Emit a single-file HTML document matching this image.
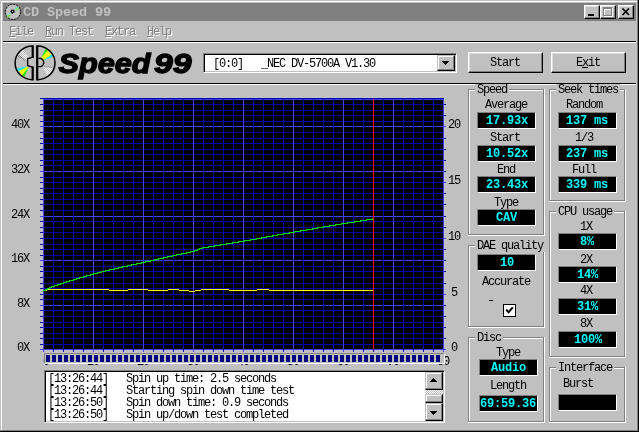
<!DOCTYPE html>
<html><head><meta charset="utf-8"><title>CD Speed 99</title>
<style>
html,body{margin:0;padding:0;background:#c0c0c0;overflow:hidden}
#w{will-change:transform;position:relative;width:639px;height:432px;background:#c0c0c0;overflow:hidden;font-family:"Liberation Mono",monospace;font-size:12px;line-height:12px;color:#000}
#w div,#w svg,#w span{position:absolute}
#w span{position:static}
.t{white-space:pre;letter-spacing:-1.2px;height:12px}
.b{white-space:pre;letter-spacing:-0.2px;height:12px;font-weight:bold;color:#00ffff}
.m{white-space:pre;letter-spacing:-1.2px;height:12px;color:#808080;text-shadow:1px 1px 0 #fff}
.vb{background:#000;border-top:1px solid #808080;border-left:1px solid #808080;border-bottom:1px solid #fff;border-right:1px solid #fff;width:57px;height:15px}
.gw{border:1px solid #fff;box-sizing:border-box}
.gd{border:1px solid #808080;box-sizing:border-box}
.gl{background:#c0c0c0;white-space:pre;letter-spacing:-1.2px;height:12px;padding:0 2px}
.btn{box-sizing:border-box;background:#c0c0c0;border-top:1px solid #fff;border-left:1px solid #fff;border-bottom:1px solid #000;border-right:1px solid #000;box-shadow:inset -1px -1px 0 #808080,inset 1px 1px 0 #dfdfdf}
.sbtn{box-sizing:border-box;background:#c0c0c0;border-top:1px solid #c0c0c0;border-left:1px solid #c0c0c0;border-bottom:1px solid #000;border-right:1px solid #000;box-shadow:inset -1px -1px 0 #808080,inset 1px 1px 0 #fff}
u{text-decoration:underline;text-decoration-thickness:1px;text-underline-offset:1px;text-decoration-skip-ink:none}
</style></head><body><div id="w">
<div style="left:1px;top:1px;width:636px;height:1px;background:#fff;"></div>
<div style="left:1px;top:1px;width:1px;height:429px;background:#fff;"></div>
<div style="left:637px;top:0px;width:1px;height:431px;background:#808080;"></div>
<div style="left:0px;top:430px;width:638px;height:1px;background:#808080;"></div>
<div style="left:638px;top:0px;width:1px;height:432px;background:#000;"></div>
<div style="left:0px;top:431px;width:639px;height:1px;background:#000;"></div>
<div style="left:3px;top:3px;width:633px;height:18px;background:#808080;"></div>
<svg style="left:4px;top:3px" width="18" height="18" viewBox="0 0 18 18">
<circle cx="8.9" cy="8.9" r="7.6" fill="#c0c0c0" stroke="#000" stroke-width="1" stroke-dasharray="2 1"/>
<path d="M2.59 12.65 L13.97 3.59 L14.41 4.14 L3.02 13.19 Z" fill="#00e8ff"/>
<path d="M3.02 13.19 L14.41 4.14 L14.87 4.73 L3.49 13.78 Z" fill="#ffff00"/>
<path d="M3.49 13.78 L14.87 4.73 L15.21 5.15 L3.83 14.21 Z" fill="#20e020"/>
<circle cx="8.9" cy="8.9" r="3.2" fill="#c0c0c0"/>
<circle cx="8.6" cy="8.6" r="2.1" fill="#000"/>
<rect x="8" y="8" width="1" height="1" fill="#fff"/><rect x="9" y="10" width="1" height="1" fill="#fff"/>
</svg>
<div style="left:23px;top:6px;font-size:13.5px;line-height:14px;height:14px;font-weight:bold;color:#c0c0c0;white-space:pre;letter-spacing:-0.1px">CD Speed 99</div>
<div class="btn" style="left:584px;top:5px;width:16px;height:14px;"></div>
<div class="btn" style="left:600px;top:5px;width:16px;height:14px;"></div>
<div class="btn" style="left:618px;top:5px;width:16px;height:14px;"></div>
<div style="left:588px;top:14px;width:6px;height:2px;background:#000;"></div>
<div style="left:604px;top:8px;width:9px;height:9px;border:1px solid #fff;border-top-width:2px;box-sizing:border-box"></div>
<div style="left:603px;top:7px;width:9px;height:9px;border:1px solid #808080;border-top-width:2px;box-sizing:border-box"></div>
<svg style="left:618px;top:5px" width="16" height="14" viewBox="0 0 16 14"><path d="M4.5 3.5 L11 10 M11 3.5 L4.5 10" stroke="#000" stroke-width="1.7" fill="none"/></svg>
<div class="m" style="left:9px;top:26px;"><u>F</u>ile</div>
<div class="m" style="left:45px;top:26px;"><u>R</u>un Test</div>
<div class="m" style="left:105px;top:26px;"><u>E</u>xtra</div>
<div class="m" style="left:147px;top:26px;"><u>H</u>elp</div>
<div style="left:3px;top:41px;width:633px;height:1px;background:#000;"></div>
<div style="left:3px;top:42px;width:633px;height:1px;background:#fff;"></div>
<div style="left:3px;top:83px;width:633px;height:1px;background:#000;"></div>
<div style="left:3px;top:84px;width:633px;height:1px;background:#fff;"></div>
<svg style="left:10px;top:43px" width="50" height="40" viewBox="10 43 50 40">
<defs><pattern id="dz" width="2" height="2" patternUnits="userSpaceOnUse"><rect width="2" height="2" fill="#fff"/><rect width="1" height="1" fill="#c0c0c0"/><rect x="1" y="1" width="1" height="1" fill="#c0c0c0"/></pattern>
<pattern id="dh" width="2" height="2" patternUnits="userSpaceOnUse"><rect width="2" height="2" fill="#c0c0c0"/><rect width="1" height="1" fill="#808080"/><rect x="1" y="1" width="1" height="1" fill="#808080"/></pattern></defs>
<path d="M20.6 50.4 L23.8 49.4 L28.4 57.4 L26.2 60 L18.4 54.4 Z" fill="url(#dz)"/>
<path d="M18.4 54.4 L26.2 60 L25.2 61.2 L17.6 56.4 Z" fill="url(#dh)"/>
<path d="M27.8 66.4 L17.6 69.4 L22.6 76.2 L24.4 76.4 L28.4 67.6 Z" fill="#ffff00"/>
<path d="M27.8 66.2 L17.2 68.6 L18.2 71.4 Z" fill="#00e8ff"/>
<path d="M28.6 67 L22 75.6 L24.6 76.8 Z" fill="#20e020"/>
<path d="M41.6 57.6 L46.4 49.2 L52.8 56 L43.6 60.2 Z" fill="#ffff00"/>
<path d="M41.2 57.6 L45.6 48.8 L48.2 50 Z" fill="#20e020"/>
<path d="M43.2 60.6 L53.2 56.8 L52 54.2 Z" fill="#00e8ff"/>
<path d="M42.8 66.6 L52.8 67.6 L51.6 71.6 L47 76 Z" fill="url(#dz)"/>
<path d="M42.6 66 L53 66.4 L52.6 68 L42.8 66.8 Z" fill="url(#dh)"/>
<path d="M32.5 46.1 A17.4 16.8 0 0 0 32.5 79.7" fill="none" stroke="#000" stroke-width="1.5"/>
<rect x="31.6" y="45.4" width="2.2" height="12.6"/><rect x="31.6" y="66.4" width="2.2" height="14"/>
<path d="M32 57.4 L27.6 58.8 L27.6 65.6 L32 67" fill="none" stroke="#000" stroke-width="1.4"/>
<path d="M37.4 46.1 A17.6 16.8 0 0 1 37.4 79.7" fill="none" stroke="#000" stroke-width="1.5"/>
<rect x="36.1" y="45.4" width="2.2" height="35"/>
<path d="M38.2 58.4 L40.6 58.4 Q43.8 59.6 43.8 62.5 Q43.8 65.4 40.6 66.6 L38.2 66.6" fill="none" stroke="#000" stroke-width="1.3"/>
</svg>
<svg style="left:56px;top:44px" width="140" height="38" viewBox="56 44 140 38"><g font-family="Liberation Sans, sans-serif" font-weight="bold" font-style="italic" font-size="27.5" stroke="#000" stroke-width="1.3" fill="#000"><text x="58.5" y="73" textLength="92" lengthAdjust="spacingAndGlyphs">Speed</text><text x="154" y="73" textLength="37.5" lengthAdjust="spacingAndGlyphs">99</text></g></svg>
<div style="left:203px;top:53px;width:254px;height:20px;background:#fff;box-sizing:border-box;border-top:1px solid #808080;border-left:1px solid #808080;border-bottom:1px solid #fff;border-right:1px solid #fff;box-shadow:inset 1px 1px 0 #000,inset -1px -1px 0 #c0c0c0"></div>
<div class="t" style="left:213px;top:58px;">[0:0]   _NEC DV-5700A V1.30</div>
<div class="sbtn" style="left:437px;top:55px;width:18px;height:16px;"></div>
<svg style="left:441px;top:60px" width="9" height="6" viewBox="0 0 9 6" shape-rendering="crispEdges"><path d="M1 1h7v1h-1v1h-1v1h-1v1h-1v-1h-1v-1h-1v-1h-1z" fill="#000"/></svg>
<div class="btn" style="left:468px;top:52px;width:75px;height:21px;"></div>
<div class="t" style="left:490px;top:57px;">Start</div>
<div class="btn" style="left:551px;top:52px;width:75px;height:21px;"></div>
<div class="t" style="left:576px;top:57px;">E<u>x</u>it</div>
<svg style="left:0;top:90px" width="470" height="280" viewBox="0 90 470 280" shape-rendering="crispEdges"><rect x="43" y="98" width="401" height="252" fill="#000"/><rect x="40" y="349" width="404" height="1" fill="#4040ff"/><rect x="444" y="349" width="2" height="1" fill="#4040ff"/><rect x="40" y="344" width="404" height="1" fill="#0000a8"/><rect x="40" y="338" width="404" height="1" fill="#0000a8"/><rect x="444" y="338" width="2" height="1" fill="#0000a8"/><rect x="40" y="333" width="404" height="1" fill="#0000a8"/><rect x="40" y="327" width="404" height="1" fill="#0000a8"/><rect x="444" y="327" width="2" height="1" fill="#0000a8"/><rect x="40" y="322" width="404" height="1" fill="#0000a8"/><rect x="40" y="316" width="404" height="1" fill="#0000a8"/><rect x="444" y="316" width="2" height="1" fill="#0000a8"/><rect x="40" y="310" width="404" height="1" fill="#0000a8"/><rect x="40" y="305" width="404" height="1" fill="#4040ff"/><rect x="444" y="305" width="2" height="1" fill="#0000a8"/><rect x="40" y="299" width="404" height="1" fill="#0000a8"/><rect x="40" y="294" width="404" height="1" fill="#0000a8"/><rect x="444" y="294" width="2" height="1" fill="#4040ff"/><rect x="40" y="288" width="404" height="1" fill="#0000a8"/><rect x="40" y="283" width="404" height="1" fill="#0000a8"/><rect x="444" y="283" width="2" height="1" fill="#0000a8"/><rect x="40" y="277" width="404" height="1" fill="#0000a8"/><rect x="40" y="271" width="404" height="1" fill="#0000a8"/><rect x="444" y="271" width="2" height="1" fill="#0000a8"/><rect x="40" y="266" width="404" height="1" fill="#0000a8"/><rect x="40" y="260" width="404" height="1" fill="#4040ff"/><rect x="444" y="260" width="2" height="1" fill="#0000a8"/><rect x="40" y="255" width="404" height="1" fill="#0000a8"/><rect x="40" y="249" width="404" height="1" fill="#0000a8"/><rect x="444" y="249" width="2" height="1" fill="#0000a8"/><rect x="40" y="244" width="404" height="1" fill="#0000a8"/><rect x="40" y="238" width="404" height="1" fill="#0000a8"/><rect x="444" y="238" width="2" height="1" fill="#4040ff"/><rect x="40" y="232" width="404" height="1" fill="#0000a8"/><rect x="40" y="227" width="404" height="1" fill="#0000a8"/><rect x="444" y="227" width="2" height="1" fill="#0000a8"/><rect x="40" y="221" width="404" height="1" fill="#0000a8"/><rect x="40" y="216" width="404" height="1" fill="#4040ff"/><rect x="444" y="216" width="2" height="1" fill="#0000a8"/><rect x="40" y="210" width="404" height="1" fill="#0000a8"/><rect x="40" y="204" width="404" height="1" fill="#0000a8"/><rect x="444" y="204" width="2" height="1" fill="#0000a8"/><rect x="40" y="199" width="404" height="1" fill="#0000a8"/><rect x="40" y="193" width="404" height="1" fill="#0000a8"/><rect x="444" y="193" width="2" height="1" fill="#0000a8"/><rect x="40" y="188" width="404" height="1" fill="#0000a8"/><rect x="40" y="182" width="404" height="1" fill="#0000a8"/><rect x="444" y="182" width="2" height="1" fill="#4040ff"/><rect x="40" y="177" width="404" height="1" fill="#0000a8"/><rect x="40" y="171" width="404" height="1" fill="#4040ff"/><rect x="444" y="171" width="2" height="1" fill="#0000a8"/><rect x="40" y="165" width="404" height="1" fill="#0000a8"/><rect x="40" y="160" width="404" height="1" fill="#0000a8"/><rect x="444" y="160" width="2" height="1" fill="#0000a8"/><rect x="40" y="154" width="404" height="1" fill="#0000a8"/><rect x="40" y="149" width="404" height="1" fill="#0000a8"/><rect x="444" y="149" width="2" height="1" fill="#0000a8"/><rect x="40" y="143" width="404" height="1" fill="#0000a8"/><rect x="40" y="138" width="404" height="1" fill="#0000a8"/><rect x="444" y="138" width="2" height="1" fill="#0000a8"/><rect x="40" y="132" width="404" height="1" fill="#0000a8"/><rect x="40" y="126" width="404" height="1" fill="#4040ff"/><rect x="444" y="126" width="2" height="1" fill="#4040ff"/><rect x="40" y="121" width="404" height="1" fill="#0000a8"/><rect x="40" y="115" width="404" height="1" fill="#0000a8"/><rect x="444" y="115" width="2" height="1" fill="#0000a8"/><rect x="40" y="110" width="404" height="1" fill="#0000a8"/><rect x="40" y="104" width="404" height="1" fill="#0000a8"/><rect x="444" y="104" width="2" height="1" fill="#0000a8"/><rect x="40" y="98" width="404" height="1" fill="#0000a8"/><rect x="43" y="99" width="401" height="1" fill="#4040ff"/><rect x="43" y="99" width="1" height="253" fill="#4040ff"/><rect x="53" y="99" width="1" height="253" fill="#0000a8"/><rect x="63" y="99" width="1" height="253" fill="#0000a8"/><rect x="73" y="99" width="1" height="253" fill="#0000a8"/><rect x="83" y="99" width="1" height="253" fill="#0000a8"/><rect x="93" y="99" width="1" height="253" fill="#4040ff"/><rect x="103" y="99" width="1" height="253" fill="#0000a8"/><rect x="113" y="99" width="1" height="253" fill="#0000a8"/><rect x="123" y="99" width="1" height="253" fill="#0000a8"/><rect x="133" y="99" width="1" height="253" fill="#0000a8"/><rect x="143" y="99" width="1" height="253" fill="#4040ff"/><rect x="153" y="99" width="1" height="253" fill="#0000a8"/><rect x="163" y="99" width="1" height="253" fill="#0000a8"/><rect x="173" y="99" width="1" height="253" fill="#0000a8"/><rect x="183" y="99" width="1" height="253" fill="#0000a8"/><rect x="193" y="99" width="1" height="253" fill="#4040ff"/><rect x="203" y="99" width="1" height="253" fill="#0000a8"/><rect x="213" y="99" width="1" height="253" fill="#0000a8"/><rect x="223" y="99" width="1" height="253" fill="#0000a8"/><rect x="233" y="99" width="1" height="253" fill="#0000a8"/><rect x="243" y="99" width="1" height="253" fill="#4040ff"/><rect x="253" y="99" width="1" height="253" fill="#0000a8"/><rect x="263" y="99" width="1" height="253" fill="#0000a8"/><rect x="273" y="99" width="1" height="253" fill="#0000a8"/><rect x="283" y="99" width="1" height="253" fill="#0000a8"/><rect x="293" y="99" width="1" height="253" fill="#4040ff"/><rect x="303" y="99" width="1" height="253" fill="#0000a8"/><rect x="313" y="99" width="1" height="253" fill="#0000a8"/><rect x="323" y="99" width="1" height="253" fill="#0000a8"/><rect x="333" y="99" width="1" height="253" fill="#0000a8"/><rect x="343" y="99" width="1" height="253" fill="#4040ff"/><rect x="353" y="99" width="1" height="253" fill="#0000a8"/><rect x="363" y="99" width="1" height="253" fill="#0000a8"/><rect x="373" y="99" width="1" height="253" fill="#0000a8"/><rect x="383" y="99" width="1" height="253" fill="#0000a8"/><rect x="393" y="99" width="1" height="253" fill="#4040ff"/><rect x="403" y="99" width="1" height="253" fill="#0000a8"/><rect x="413" y="99" width="1" height="253" fill="#0000a8"/><rect x="423" y="99" width="1" height="253" fill="#0000a8"/><rect x="433" y="99" width="1" height="253" fill="#0000a8"/><rect x="443" y="99" width="1" height="253" fill="#4040ff"/><rect x="43" y="290" width="4" height="1" fill="#ffff00"/><rect x="47" y="289" width="62" height="1" fill="#ffff00"/><rect x="109" y="290" width="19" height="1" fill="#ffff00"/><rect x="128" y="289" width="20" height="1" fill="#ffff00"/><rect x="148" y="290" width="20" height="1" fill="#ffff00"/><rect x="168" y="289" width="11" height="1" fill="#ffff00"/><rect x="179" y="290" width="10" height="1" fill="#ffff00"/><rect x="189" y="291" width="6" height="1" fill="#ffff00"/><rect x="195" y="290" width="6" height="1" fill="#ffff00"/><rect x="201" y="289" width="28" height="1" fill="#ffff00"/><rect x="229" y="290" width="28" height="1" fill="#ffff00"/><rect x="257" y="289" width="12" height="1" fill="#ffff00"/><rect x="269" y="290" width="104" height="1" fill="#ffff00"/><rect x="43" y="290" width="3" height="1" fill="#00e000"/><rect x="45" y="289" width="3" height="1" fill="#00e000"/><rect x="47" y="288" width="3" height="1" fill="#00e000"/><rect x="49" y="287" width="3" height="1" fill="#00e000"/><rect x="51" y="286" width="4" height="1" fill="#00e000"/><rect x="54" y="285" width="4" height="1" fill="#00e000"/><rect x="57" y="284" width="4" height="1" fill="#00e000"/><rect x="60" y="283" width="4" height="1" fill="#00e000"/><rect x="63" y="282" width="4" height="1" fill="#00e000"/><rect x="66" y="281" width="4" height="1" fill="#00e000"/><rect x="69" y="280" width="5" height="1" fill="#00e000"/><rect x="73" y="279" width="4" height="1" fill="#00e000"/><rect x="76" y="278" width="4" height="1" fill="#00e000"/><rect x="79" y="277" width="5" height="1" fill="#00e000"/><rect x="83" y="276" width="4" height="1" fill="#00e000"/><rect x="86" y="275" width="5" height="1" fill="#00e000"/><rect x="90" y="274" width="4" height="1" fill="#00e000"/><rect x="93" y="273" width="5" height="1" fill="#00e000"/><rect x="97" y="272" width="5" height="1" fill="#00e000"/><rect x="101" y="271" width="5" height="1" fill="#00e000"/><rect x="105" y="270" width="5" height="1" fill="#00e000"/><rect x="109" y="269" width="6" height="1" fill="#00e000"/><rect x="114" y="268" width="5" height="1" fill="#00e000"/><rect x="118" y="267" width="5" height="1" fill="#00e000"/><rect x="122" y="266" width="6" height="1" fill="#00e000"/><rect x="127" y="265" width="5" height="1" fill="#00e000"/><rect x="131" y="264" width="6" height="1" fill="#00e000"/><rect x="136" y="263" width="6" height="1" fill="#00e000"/><rect x="141" y="262" width="5" height="1" fill="#00e000"/><rect x="145" y="261" width="6" height="1" fill="#00e000"/><rect x="150" y="260" width="5" height="1" fill="#00e000"/><rect x="154" y="259" width="5" height="1" fill="#00e000"/><rect x="158" y="258" width="6" height="1" fill="#00e000"/><rect x="163" y="257" width="5" height="1" fill="#00e000"/><rect x="167" y="256" width="6" height="1" fill="#00e000"/><rect x="172" y="255" width="5" height="1" fill="#00e000"/><rect x="176" y="254" width="6" height="1" fill="#00e000"/><rect x="181" y="253" width="6" height="1" fill="#00e000"/><rect x="186" y="252" width="5" height="1" fill="#00e000"/><rect x="190" y="251" width="5" height="1" fill="#00e000"/><rect x="194" y="250" width="4" height="1" fill="#00e000"/><rect x="197" y="249" width="3" height="1" fill="#00e000"/><rect x="199" y="248" width="4" height="1" fill="#00e000"/><rect x="202" y="247" width="7" height="1" fill="#00e000"/><rect x="208" y="246" width="7" height="1" fill="#00e000"/><rect x="214" y="245" width="7" height="1" fill="#00e000"/><rect x="220" y="244" width="7" height="1" fill="#00e000"/><rect x="226" y="243" width="7" height="1" fill="#00e000"/><rect x="232" y="242" width="7" height="1" fill="#00e000"/><rect x="238" y="241" width="7" height="1" fill="#00e000"/><rect x="244" y="240" width="7" height="1" fill="#00e000"/><rect x="250" y="239" width="7" height="1" fill="#00e000"/><rect x="256" y="238" width="6" height="1" fill="#00e000"/><rect x="261" y="237" width="6" height="1" fill="#00e000"/><rect x="266" y="236" width="7" height="1" fill="#00e000"/><rect x="272" y="235" width="6" height="1" fill="#00e000"/><rect x="277" y="234" width="7" height="1" fill="#00e000"/><rect x="283" y="233" width="7" height="1" fill="#00e000"/><rect x="289" y="232" width="6" height="1" fill="#00e000"/><rect x="294" y="231" width="7" height="1" fill="#00e000"/><rect x="300" y="230" width="7" height="1" fill="#00e000"/><rect x="306" y="229" width="7" height="1" fill="#00e000"/><rect x="312" y="228" width="6" height="1" fill="#00e000"/><rect x="317" y="227" width="7" height="1" fill="#00e000"/><rect x="323" y="226" width="7" height="1" fill="#00e000"/><rect x="329" y="225" width="7" height="1" fill="#00e000"/><rect x="335" y="224" width="7" height="1" fill="#00e000"/><rect x="341" y="223" width="7" height="1" fill="#00e000"/><rect x="347" y="222" width="8" height="1" fill="#00e000"/><rect x="354" y="221" width="7" height="1" fill="#00e000"/><rect x="360" y="220" width="7" height="1" fill="#00e000"/><rect x="366" y="219" width="7" height="1" fill="#00e000"/><rect x="372" y="218" width="2" height="1" fill="#00e000"/><rect x="373" y="99" width="1" height="250" fill="#ff0000"/></svg>
<div class="t" style="left:11px;top:119px;">40X</div>
<div class="t" style="left:11px;top:164px;">32X</div>
<div class="t" style="left:11px;top:209px;">24X</div>
<div class="t" style="left:11px;top:253px;">16X</div>
<div class="t" style="left:11px;top:298px;"> 8X</div>
<div class="t" style="left:11px;top:342px;"> 0X</div>
<div class="t" style="left:448px;top:119px;">20</div>
<div class="t" style="left:448px;top:175px;">15</div>
<div class="t" style="left:448px;top:231px;">10</div>
<div class="t" style="left:451px;top:287px;">5</div>
<div class="t" style="left:451px;top:342px;">0</div>
<div class="t" style="left:43px;top:356px;">0</div>
<div class="t" style="left:87px;top:356px;">10</div>
<div class="t" style="left:137px;top:356px;">20</div>
<div class="t" style="left:187px;top:356px;">30</div>
<div class="t" style="left:237px;top:356px;">40</div>
<div class="t" style="left:287px;top:356px;">50</div>
<div class="t" style="left:337px;top:356px;">60</div>
<div class="t" style="left:387px;top:356px;">70</div>
<div class="t" style="left:437px;top:356px;">80</div>
<div style="left:44px;top:353px;width:399px;height:9px;background:#c0c0c0;border-top:1px solid #808080;border-left:1px solid #808080;border-bottom:1px solid #fff;border-right:1px solid #fff"></div>
<div style="left:46px;top:355px;width:394px;height:7px;background:repeating-linear-gradient(90deg,#000080 0,#000080 4px,#c0c0c0 4px,#c0c0c0 6px)"></div>
<div style="left:44px;top:370px;width:401px;height:53px;background:#fff;box-sizing:border-box;border-top:1px solid #808080;border-left:1px solid #808080;border-bottom:1px solid #fff;border-right:1px solid #fff;box-shadow:inset 1px 1px 0 #000,inset -1px -1px 0 #c0c0c0"></div>
<div class="t" style="left:48px;top:373px;">[13:26:44]   Spin up time: 2.5 seconds</div>
<div class="t" style="left:48px;top:385px;">[13:26:44]   Starting spin down time test</div>
<div class="t" style="left:48px;top:397px;">[13:26:50]   Spin down time: 0.9 seconds</div>
<div class="t" style="left:48px;top:409px;">[13:26:50]   Spin up/down test completed</div>
<div style="left:425px;top:372px;width:18px;height:49px;background:repeating-conic-gradient(#fff 0 25%,#c0c0c0 0 50%) 0 0/2px 2px"></div>
<div class="sbtn" style="left:425px;top:372px;width:18px;height:18px;"></div>
<div class="sbtn" style="left:425px;top:394px;width:18px;height:9px;"></div>
<div class="sbtn" style="left:425px;top:403px;width:18px;height:18px;"></div>
<svg style="left:429px;top:377px" width="9" height="6" viewBox="0 0 9 6" shape-rendering="crispEdges"><path d="M4 1h1v1h1v1h1v1h1v1h-7v-1h1v-1h1v-1h1z" fill="#000"/></svg>
<svg style="left:429px;top:410px" width="9" height="6" viewBox="0 0 9 6" shape-rendering="crispEdges"><path d="M1 1h7v1h-1v1h-1v1h-1v1h-1v-1h-1v-1h-1v-1h-1z" fill="#000"/></svg>
<div class="gw" style="left:468px;top:89px;width:77px;height:147px"></div>
<div class="gd" style="left:468px;top:89px;width:76px;height:146px"></div>
<div style="left:469px;top:90px;width:73px;height:143px;border-top:1px solid #fff;border-left:1px solid #fff"></div>
<div class="gl" style="left:475px;top:84px">Speed</div>
<div class="t" style="left:485px;top:99px;">Average</div>
<div class="vb" style="left:477px;top:112px"></div>
<div class="b" style="left:486px;top:115px;">17.93x</div>
<div class="t" style="left:490px;top:132px;">Start</div>
<div class="vb" style="left:477px;top:145px"></div>
<div class="b" style="left:486px;top:148px;">10.52x</div>
<div class="t" style="left:497px;top:164px;">End</div>
<div class="vb" style="left:477px;top:176px"></div>
<div class="b" style="left:486px;top:179px;">23.43x</div>
<div class="t" style="left:494px;top:197px;">Type</div>
<div class="vb" style="left:477px;top:209px"></div>
<div class="b" style="left:496px;top:212px;">CAV</div>
<div class="gw" style="left:549px;top:89px;width:77px;height:113px"></div>
<div class="gd" style="left:549px;top:89px;width:76px;height:112px"></div>
<div style="left:550px;top:90px;width:73px;height:109px;border-top:1px solid #fff;border-left:1px solid #fff"></div>
<div class="gl" style="left:556px;top:84px">Seek times</div>
<div class="t" style="left:566px;top:99px;">Random</div>
<div class="vb" style="left:558px;top:112px"></div>
<div class="b" style="left:566px;top:115px;">137 ms</div>
<div class="t" style="left:575px;top:132px;">1/3</div>
<div class="vb" style="left:558px;top:145px"></div>
<div class="b" style="left:566px;top:148px;">237 ms</div>
<div class="t" style="left:572px;top:164px;">Full</div>
<div class="vb" style="left:558px;top:176px"></div>
<div class="b" style="left:566px;top:179px;">339 ms</div>
<div class="gw" style="left:549px;top:211px;width:77px;height:147px"></div>
<div class="gd" style="left:549px;top:211px;width:76px;height:146px"></div>
<div style="left:550px;top:212px;width:73px;height:143px;border-top:1px solid #fff;border-left:1px solid #fff"></div>
<div class="gl" style="left:556px;top:206px">CPU usage</div>
<div class="t" style="left:580px;top:221px;">1X</div>
<div class="vb" style="left:558px;top:233px"></div>
<div class="b" style="left:580px;top:236px;">8%</div>
<div class="t" style="left:580px;top:254px;">2X</div>
<div class="vb" style="left:558px;top:266px"></div>
<div class="b" style="left:577px;top:269px;">14%</div>
<div class="t" style="left:580px;top:285px;">4X</div>
<div class="vb" style="left:558px;top:298px"></div>
<div class="b" style="left:577px;top:301px;">31%</div>
<div class="t" style="left:580px;top:318px;">8X</div>
<div class="vb" style="left:558px;top:331px"></div>
<div class="b" style="left:574px;top:334px;">100%</div>
<div class="gw" style="left:468px;top:245px;width:77px;height:83px"></div>
<div class="gd" style="left:468px;top:245px;width:76px;height:82px"></div>
<div style="left:469px;top:246px;width:73px;height:79px;border-top:1px solid #fff;border-left:1px solid #fff"></div>
<div class="gl" style="left:475px;top:240px">DAE quality</div>
<div class="vb" style="left:477px;top:254px"></div>
<div class="b" style="left:500px;top:257px;">10</div>
<div class="t" style="left:482px;top:276px;">Accurate</div>
<div style="left:489px;top:300px;width:4px;height:1px;background:#000;"></div>
<div style="left:503px;top:304px;width:13px;height:13px;background:#fff;box-sizing:border-box;border:1px solid #000"></div>
<svg style="left:505px;top:306px" width="9" height="9" viewBox="0 0 9 9"><path d="M1.2 3.6 L3.6 6.2 L7.8 1.4" stroke="#000" stroke-width="2" fill="none"/></svg>
<div class="gw" style="left:468px;top:337px;width:77px;height:86px"></div>
<div class="gd" style="left:468px;top:337px;width:76px;height:85px"></div>
<div style="left:469px;top:338px;width:73px;height:82px;border-top:1px solid #fff;border-left:1px solid #fff"></div>
<div class="gl" style="left:475px;top:332px">Disc</div>
<div class="t" style="left:496px;top:347px;">Type</div>
<div class="vb" style="left:479px;top:359px"></div>
<div class="b" style="left:491px;top:362px;">Audio</div>
<div class="t" style="left:490px;top:380px;">Length</div>
<div class="vb" style="left:479px;top:395px"></div>
<div class="b" style="left:480px;top:398px;">69:59.36</div>
<div class="gw" style="left:549px;top:367px;width:77px;height:56px"></div>
<div class="gd" style="left:549px;top:367px;width:76px;height:55px"></div>
<div style="left:550px;top:368px;width:73px;height:52px;border-top:1px solid #fff;border-left:1px solid #fff"></div>
<div class="gl" style="left:556px;top:362px">Interface</div>
<div class="t" style="left:563px;top:378px;">Burst</div>
<div class="vb" style="left:558px;top:394px"></div>
</div></body></html>
